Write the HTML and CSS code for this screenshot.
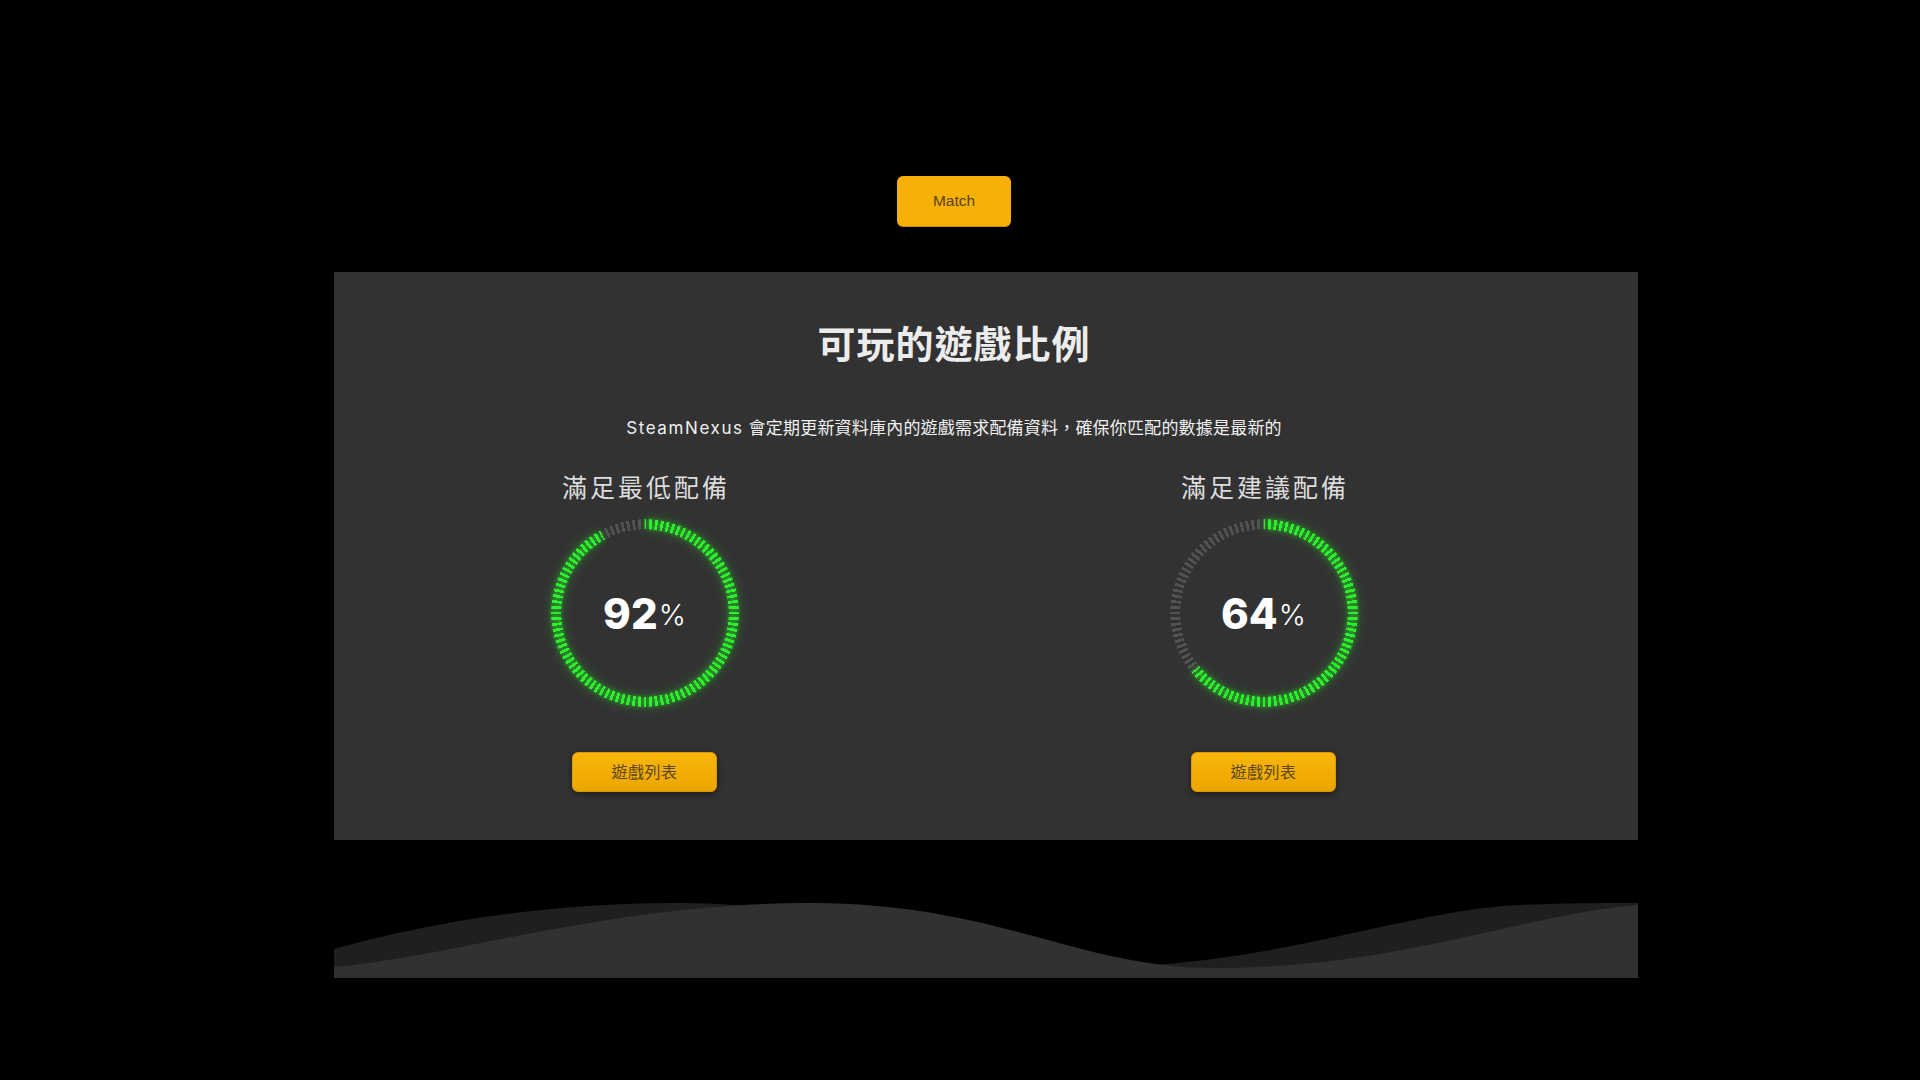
FILE: index.html
```html
<!DOCTYPE html>
<html lang="zh-Hant">
<head>
<meta charset="utf-8">
<title>SteamNexus</title>
<link rel="stylesheet" href="styles.css">
</head>
<body>
<div class="page">
  <div class="top">
    <button class="match-btn">Match</button>
  </div>
  <section class="panel">
    <h2 class="title">可玩的遊戲比例</h2>
    <p class="subtitle"><span class="brand">SteamNexus</span> 會定期更新資料庫內的遊戲需求配備資料，確保你匹配的數據是最新的</p>
    <div class="stats">
      <div class="stat">
        <h3 class="stat-title">滿足最低配備</h3>
        <div class="gauge">
          <div class="band"><div class="ticks track"></div></div>
          <div class="glow"><div class="band"><div class="ticks fill" style="--p:92%"></div></div></div>
          <div class="value">92<span class="pct">%</span></div>
        </div>
        <button class="list-btn">遊戲列表</button>
      </div>
      <div class="stat">
        <h3 class="stat-title">滿足建議配備</h3>
        <div class="gauge">
          <div class="band"><div class="ticks track"></div></div>
          <div class="glow"><div class="band"><div class="ticks fill" style="--p:64%"></div></div></div>
          <div class="value">64<span class="pct">%</span></div>
        </div>
        <button class="list-btn">遊戲列表</button>
      </div>
    </div>
  </section>
  <div class="wave">
    <svg viewBox="0 0 1304 76" preserveAspectRatio="none" width="1304" height="76">
      <path class="wave-back" d="M0,47 C80,25 200,0 350,1 C530,2 610,65 750,65 C940,66 1060,10 1184,3 C1235,1 1270,1 1304,1 L1304,76 L0,76 Z"/>
      <path class="wave-front" d="M0,65 C120,55 280,0 480,1 C665,2 745,66 880,66 C1065,66 1190,12 1304,3 L1304,76 L0,76 Z"/>
    </svg>
  </div>
</div>
</body>
</html>
```

FILE: styles.css
```css
* {
  box-sizing: border-box;
}

html, body {
  margin: 0;
  padding: 0;
  background: #000;
}

body {
  width: 1920px;
  height: 1080px;
  overflow: hidden;
  font-family: "Inter", "Noto Sans CJK TC", sans-serif;
  color: #e6e6e6;
}

.page {
  width: 1304px;
  margin-left: 334px;
  padding-top: 176px;
}

.top {
  display: flex;
  justify-content: center;
  padding-right: 64px;
}

.match-btn {
  width: 114px;
  height: 51px;
  border: none;
  border-radius: 6px;
  background: #f6b008;
  box-shadow: inset 0 -1px 0 rgba(120, 70, 0, 0.35);
  color: #5a4410;
  font-family: "Liberation Sans", Arial, sans-serif;
  font-size: 15.5px;
  padding: 0 0 2px;
}

.panel {
  margin-top: 45px;
  background: #323232;
  padding: 51px 64px 48px 0;
  display: flex;
  flex-direction: column;
  align-items: center;
}

.title {
  margin: 0;
  font-family: "Noto Sans CJK TC", sans-serif;
  font-size: 38px;
  line-height: 38px;
  font-weight: 700;
  letter-spacing: 1px;
  color: #ececec;
}

.subtitle {
  margin: 55px 0 0;
  font-size: 17px;
  line-height: 24px;
  letter-spacing: 0.2px;
  color: #f0f0f0;
  font-family: "Inter", "Noto Sans CJK TC", sans-serif;
}

.brand {
  letter-spacing: 1.6px;
}

.stats {
  margin-top: 31px;
  display: grid;
  grid-template-columns: 300px 300px;
  column-gap: 319px;
}

.stat {
  display: flex;
  flex-direction: column;
  align-items: center;
}

.stat-title {
  margin: 0;
  font-family: "Noto Sans CJK TC", sans-serif;
  font-size: 25px;
  line-height: 30px;
  font-weight: 400;
  letter-spacing: 3px;
  padding-left: 3px;
  color: #dcdcdc;
}

.gauge {
  position: relative;
  width: 188px;
  height: 188px;
  margin-top: 18px;
}

.band,
.glow {
  position: absolute;
  inset: 0;
}

.band {
  -webkit-mask: radial-gradient(circle at center, transparent 0 83.5px, #000 84px 93.5px, transparent 94px);
  mask: radial-gradient(circle at center, transparent 0 83.5px, #000 84px 93.5px, transparent 94px);
}

.ticks {
  width: 100%;
  height: 100%;
  -webkit-mask: repeating-conic-gradient(from -0.9deg, #000 0 1.8deg, transparent 1.8deg 3.6deg);
  mask: repeating-conic-gradient(from -0.9deg, #000 0 1.8deg, transparent 1.8deg 3.6deg);
}

.track {
  background: #525252;
}

.fill {
  background: conic-gradient(#2bf02b 0 var(--p), transparent var(--p) 100%);
}

.glow {
  filter: drop-shadow(0 0 2px rgba(40, 240, 40, 0.75)) drop-shadow(0 0 6px rgba(40, 240, 40, 0.35));
}

.value {
  position: absolute;
  inset: 0;
  display: flex;
  align-items: center;
  justify-content: center;
  font-family: "Inter", sans-serif;
  font-weight: 800;
  font-size: 42px;
  color: #fff;
}

.pct {
  font-size: 29px;
  font-weight: 300;
  align-self: center;
  margin-top: 3px;
  margin-left: 1px;
}

.list-btn {
  margin-top: 45px;
  width: 145px;
  height: 40px;
  border: 1px solid #d79a00;
  border-radius: 6px;
  background: linear-gradient(180deg, #f8b60c 0%, #eba500 100%);
  box-shadow: 0 2px 6px rgba(0, 0, 0, 0.45);
  color: #5b4616;
  font-family: "Noto Sans CJK TC", sans-serif;
  font-size: 16px;
  letter-spacing: 0.5px;
  padding: 0 0 2px;
}

.wave {
  margin-top: 62px;
  height: 76px;
  line-height: 0;
}

.wave svg {
  display: block;
}

.wave-back {
  fill: #1f1f1f;
}

.wave-front {
  fill: #313131;
}
```
